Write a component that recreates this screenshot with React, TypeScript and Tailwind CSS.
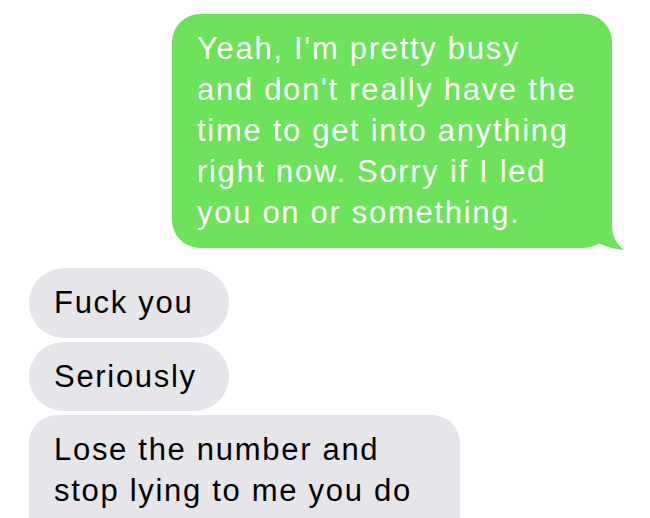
import React from "react";

const font = { fontFamily: '"Liberation Sans", Arial, Helvetica, sans-serif' };

export default function App() {
  return (
    <div
      className="w-[650px] h-[518px] overflow-hidden bg-white flex flex-col"
      style={font}
    >
      <div className="flex justify-end pt-[14px] pr-[38px]">
        <div className="relative w-[440px]">
          <div className="relative z-10 bg-[#6de25b] rounded-[28px] pl-[25px] pr-[10px] pt-[14px] pb-[15px] text-white text-[31px] leading-[41px] tracking-[1.7px]">
            Yeah, I'm pretty busy
            <br />
            and don't really have the
            <br />
            time to get into anything
            <br />
            right now. Sorry if I led
            <br />
            you on or something.
          </div>
          <svg
            className="absolute z-20 left-[418px] top-[201px]"
            width="36"
            height="36"
            viewBox="0 0 36 36"
          >
            <path
              d="M0 0 H22 V10 C22 22 27 30 34 34.5 C26 35 18 32 8 28 C4 30 1 32 0 32.5 Z"
              fill="#6de25b"
            />
          </svg>
        </div>
      </div>
      <div className="flex flex-col items-start gap-[4px] pl-[29px] pt-[20px] text-black text-[31px] leading-[41px] tracking-[1.7px]">
        <div className="w-[200px] bg-[#e5e5ea] rounded-[35px] pl-[25px] pt-[14px] pb-[15px]">
          Fuck you
        </div>
        <div className="w-[200px] bg-[#e5e5ea] rounded-[35px] pl-[25px] pt-[14px] pb-[14px]">
          Seriously
        </div>
        <div className="w-[431px] bg-[#e5e5ea] rounded-[28px] pl-[25px] pt-[14px] pb-[60px]">
          Lose the number and
          <br />
          stop lying to me you do
        </div>
      </div>
    </div>
  );
}
